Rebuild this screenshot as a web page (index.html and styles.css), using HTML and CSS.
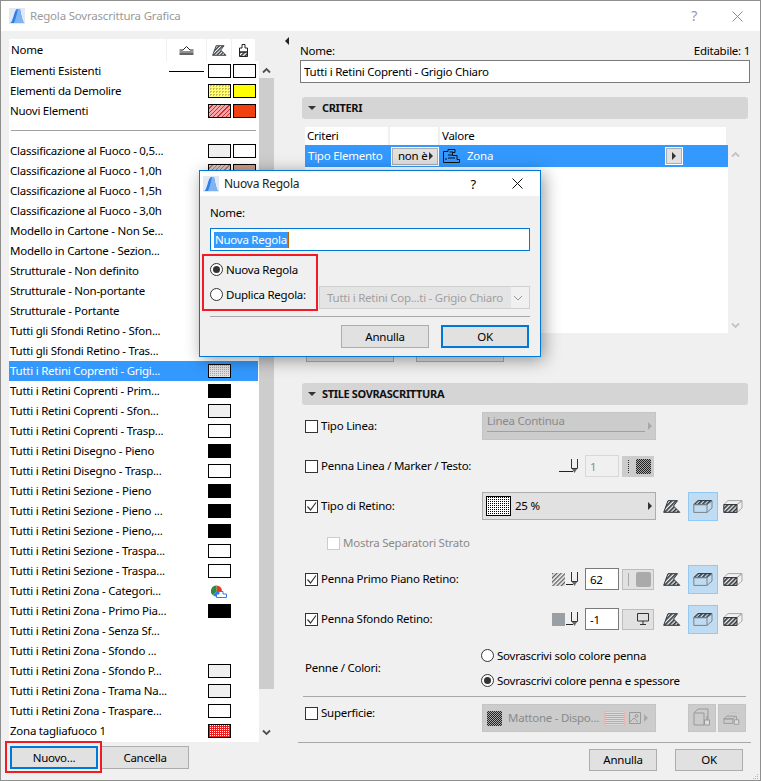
FILE: index.html
```html
<!DOCTYPE html>
<html lang="it">
<head>
<meta charset="utf-8">
<title>Regola Sovrascrittura Grafica</title>
<link rel="stylesheet" href="styles.css">
</head>
<body>
<svg class="defs" aria-hidden="true">
  <defs>
    <pattern id="h" width="3" height="3" patternUnits="userSpaceOnUse" patternTransform="rotate(45)"><rect width="1.6" height="3" fill="#2c3338"/></pattern>
    <pattern id="hg" width="3" height="3" patternUnits="userSpaceOnUse" patternTransform="rotate(45)"><rect width="1.3" height="3" fill="#5c5c5c"/></pattern>
    <pattern id="brick" width="6" height="4" patternUnits="userSpaceOnUse"><rect width="6" height="4" fill="#dcdcdc"/><path d="M0 .5H6M0 2.5H6M2 0V.5M5 2V3" stroke="#b0b0b0" stroke-width="1" fill="none"/></pattern>
    <symbol id="logo" viewBox="0 0 16 16"><rect width="16" height="16" fill="#e3e9f2"/><path d="M1 15C4 15 5 2 8 1L11 1C12 6 13 12 15 15Z" fill="#2f7fe6"/><path d="M5 15C7 10 8 5 9 1L11 1C12 6 13 12 15 15Z" fill="#7fb4f2"/></symbol>
    <symbol id="cut" viewBox="0 0 18 13"><path d="M.7 12.3 5 .7H14.5L10.5 6 16.8 12.3Z" fill="url(#h)" stroke="#2c3338" stroke-width="1"/></symbol>
    <symbol id="box" viewBox="0 0 20 13"><path d="M5 .6H19L14 4.6H.8Z" fill="url(#h)" stroke="#2c3338"/><path d="M.8 4.6H14V12.4H.8Z" fill="none" stroke="#7d8184"/><path d="M14 4.6 19 .6V8L14 12.4" fill="none" stroke="#7d8184"/></symbol>
    <symbol id="boxf" viewBox="0 0 20 13"><path d="M5 .6H19L14 4.6H.8Z" fill="none" stroke="#a6a6a6"/><path d="M14 4.6 19 .6V8L14 12.4" fill="none" stroke="#a6a6a6"/><path d="M.8 4.6H14V12.4H.8Z" fill="url(#h)" stroke="#2c3338"/></symbol>
    <symbol id="pen" viewBox="0 0 20 16"><path d="M0 13.5H14" stroke="#222" fill="none"/><path d="M12.5 1V10.5H18.5V1" stroke="#333" fill="none"/><path d="M13 11H18L15.5 15Z" fill="#666"/></symbol>
    <symbol id="pen-s" viewBox="0 0 13 16"><path d="M0 13.5H7" stroke="#222" fill="none"/><path d="M5.5 1V10.5H11.5V1" stroke="#333" fill="none"/><path d="M6 11H11L8.5 15Z" fill="#666"/></symbol>
  </defs>
</svg>

<div class="window">
  <header class="titlebar">
    <svg class="logo"><use href="#logo"/></svg>
    <span class="title-text">Regola Sovrascrittura Grafica</span>
    <span class="title-help">?</span>
    <svg class="title-close" viewBox="0 0 11 11"><path d="M.5.5 10.5 10.5M10.5.5.5 10.5" stroke="#8c8c8c" fill="none"/></svg>
  </header>

  <div class="main">
    <section class="left">
      <div class="list-head">
        <span class="lh-name">Nome</span>
        <span class="lh-col lh-line"><svg class="ic15" viewBox="0 0 15 10"><path d="M.5 5 4 5 7.5 1.5 11 5H14.5M.5 7H14.5" stroke="#222" fill="none"/><path d="M.5 9H14.5" stroke="#222" stroke-width="1.4"/></svg></span>
        <span class="lh-col lh-a"><svg class="ic13" viewBox="0 0 18 13"><use href="#cut"/></svg></span>
        <span class="lh-col lh-b"><svg class="ic9" viewBox="0 0 9 13"><path d="M3 .5H6V4H8.5V8H.5V4H3Z" fill="none" stroke="#222"/><path d="M.5 8H8.5V12.5H.5Z" fill="url(#h)" stroke="#222"/></svg></span>
      </div>
      <div class="list-wrap">
        <div class="list">
          <div class="rule"><span class="rule-name">Elementi Esistenti</span><i class="line-sample"></i><i class="sw s-white"></i><i class="sw s-white"></i></div>
          <div class="rule"><span class="rule-name">Elementi da Demolire</span><i class="sw s-ydots"></i><i class="sw s-yellow"></i></div>
          <div class="rule"><span class="rule-name">Nuovi Elementi</span><i class="sw s-rhatch"></i><i class="sw s-orange"></i></div>
          <div class="list-sep"></div>
          <div class="rule"><span class="rule-name">Classificazione al Fuoco - 0,5...</span><i class="sw s-gray"></i><i class="sw s-white"></i></div>
          <div class="rule"><span class="rule-name">Classificazione al Fuoco - 1,0h</span><i class="sw s-phatch"></i><i class="sw s-pink"></i></div>
          <div class="rule"><span class="rule-name">Classificazione al Fuoco - 1,5h</span></div>
          <div class="rule"><span class="rule-name">Classificazione al Fuoco - 3,0h</span></div>
          <div class="rule"><span class="rule-name">Modello in Cartone - Non Se...</span></div>
          <div class="rule"><span class="rule-name">Modello in Cartone - Sezion...</span></div>
          <div class="rule"><span class="rule-name">Strutturale - Non definito</span></div>
          <div class="rule"><span class="rule-name">Strutturale - Non-portante</span></div>
          <div class="rule"><span class="rule-name">Strutturale - Portante</span></div>
          <div class="rule"><span class="rule-name">Tutti gli Sfondi Retino - Sfon...</span></div>
          <div class="rule"><span class="rule-name">Tutti gli Sfondi Retino - Tras...</span></div>
          <div class="rule is-selected"><span class="rule-name">Tutti i Retini Coprenti - Grigi...</span><i class="sw s-gdots"></i></div>
          <div class="rule"><span class="rule-name">Tutti i Retini Coprenti - Prim...</span><i class="sw s-black"></i></div>
          <div class="rule"><span class="rule-name">Tutti i Retini Coprenti - Sfon...</span><i class="sw s-gray"></i></div>
          <div class="rule"><span class="rule-name">Tutti i Retini Coprenti - Trasp...</span><i class="sw s-white"></i></div>
          <div class="rule"><span class="rule-name">Tutti i Retini Disegno - Pieno</span><i class="sw s-black"></i></div>
          <div class="rule"><span class="rule-name">Tutti i Retini Disegno - Trasp...</span><i class="sw s-white"></i></div>
          <div class="rule"><span class="rule-name">Tutti i Retini Sezione - Pieno</span><i class="sw s-black"></i></div>
          <div class="rule"><span class="rule-name">Tutti i Retini Sezione - Pieno ...</span><i class="sw s-black"></i></div>
          <div class="rule"><span class="rule-name">Tutti i Retini Sezione - Pieno,...</span><i class="sw s-black"></i></div>
          <div class="rule"><span class="rule-name">Tutti i Retini Sezione - Traspa...</span><i class="sw s-white"></i></div>
          <div class="rule"><span class="rule-name">Tutti i Retini Sezione - Traspa...</span><i class="sw s-white"></i></div>
          <div class="rule"><span class="rule-name">Tutti i Retini Zona - Categori...</span><svg class="pie" viewBox="0 0 16 13"><path d="M5.5 6V.5A5.5 5.5 0 0 1 11 6Z" fill="#e23b1e"/><path d="M5.5 6 11 6A5.5 5.5 0 0 1 2 10.3Z" fill="#2f7fe6"/><path d="M5.5 6 2 10.3A5.5 5.5 0 0 1 5.5 .5Z" fill="#2e8b3c"/><path d="M5.5 12.5V9H8V6.5H12V9H15.5V12.5Z" fill="#fff" stroke="#2f7fe6"/></svg></div>
          <div class="rule"><span class="rule-name">Tutti i Retini Zona - Primo Pia...</span><i class="sw s-black"></i></div>
          <div class="rule"><span class="rule-name">Tutti i Retini Zona - Senza Sf...</span></div>
          <div class="rule"><span class="rule-name">Tutti i Retini Zona - Sfondo ...</span></div>
          <div class="rule"><span class="rule-name">Tutti i Retini Zona - Sfondo P...</span><i class="sw s-gray"></i></div>
          <div class="rule"><span class="rule-name">Tutti i Retini Zona - Trama Na...</span><i class="sw s-gray"></i></div>
          <div class="rule"><span class="rule-name">Tutti i Retini Zona - Traspare...</span><i class="sw s-white"></i></div>
          <div class="rule"><span class="rule-name">Zona tagliafuoco 1</span><i class="sw s-rdots"></i></div>
        </div>
        <div class="vscroll">
          <svg class="chev chev-up" viewBox="0 0 9 7"><path d="M1 5.5 4.5 2 8 5.5" stroke="#505050" stroke-width="1.8" fill="none"/></svg>
          <div class="thumb"></div>
          <svg class="chev chev-down" viewBox="0 0 9 7"><path d="M1 1.5 4.5 5 8 1.5" stroke="#505050" stroke-width="1.8" fill="none"/></svg>
        </div>
      </div>
      <div class="list-buttons">
        <button class="btn btn-focus btn-nuovo">Nuovo...</button>
        <button class="btn btn-cancella">Cancella</button>
      </div>
    </section>

    <div class="splitter"><i class="split-arrow"></i></div>

    <section class="right">
      <div class="name-head"><span>Nome:</span><span>Editabile: 1</span></div>
      <div class="name-input">Tutti i Retini Coprenti - Grigio Chiaro</div>

      <div class="section-head"><i class="tri-down"></i>CRITERI</div>
      <div class="crit-wrap">
        <div class="crit-table">
          <div class="crit-head"><span class="c1">Criteri</span><span class="c2"></span><span class="c3">Valore</span></div>
          <div class="crit-row">
            <span class="c1">Tipo Elemento</span>
            <span class="c2"><span class="mini-btn">non è<i class="tri-right"></i></span></span>
            <span class="c3 zone">
              <svg class="zone-ic" viewBox="0 0 17 14"><path d="M.5 13.5V2.5H5V.5H12V3.5H9.5V6.5H14V10.5H16.5V13.5Z" fill="none" stroke="#111"/><path d="M6.5 3H10M5 6H9M5 9H12M3 9V11" stroke="#111" fill="none"/></svg>
              <span class="zone-text">Zona</span>
              <span class="square-btn"><i class="tri-right"></i></span>
            </span>
          </div>
        </div>
        <div class="crit-scroll">
          <svg class="chev" viewBox="0 0 9 7"><path d="M1 5.5 4.5 2 8 5.5" stroke="#c4c4c4" stroke-width="1.8" fill="none"/></svg>
          <svg class="chev" viewBox="0 0 9 7"><path d="M1 1.5 4.5 5 8 1.5" stroke="#c4c4c4" stroke-width="1.8" fill="none"/></svg>
        </div>
      </div>
      <div class="crit-buttons"><button class="btn btn-crit"></button><button class="btn btn-crit"></button></div>

      <div class="section-head section-style"><i class="tri-down"></i>STILE SOVRASCRITTURA</div>

      <div class="row row-1">
        <label class="opt"><i class="check"></i>Tipo Linea:</label>
        <div class="ctrl"><div class="combo combo-off combo-line"><span class="combo-linetext">Linea Continua</span><i class="tri-right tri-off"></i></div></div>
      </div>
      <div class="row row-2">
        <label class="opt"><i class="check"></i>Penna Linea / Marker / Testo:</label>
        <div class="ctrl ctrl-pen">
          <svg class="pen"><use href="#pen"/></svg>
          <span class="num num-off">1</span>
          <span class="pen-sw pen-sw-off"><i class="bar"></i><i class="chk-block"></i></span>
        </div>
      </div>
      <div class="row row-2">
        <label class="opt"><i class="check is-on"><svg viewBox="0 0 13 13"><path d="M2.5 6.5 5.5 10 11 2.5" stroke="#333" stroke-width="1.2" fill="none"/></svg></i>Tipo di Retino:</label>
        <div class="ctrl"><div class="combo"><i class="pat-25"></i><span class="combo-text">25 %</span><i class="tri-right"></i></div></div>
        <div class="viewset">
          <svg class="v-cut"><use href="#cut"/></svg>
          <span class="toggle"><svg class="v-box"><use href="#box"/></svg></span>
          <svg class="v-box v-last"><use href="#boxf"/></svg>
        </div>
      </div>
      <div class="row row-4">
        <label class="opt opt-sub"><i class="check check-off"></i>Mostra Separatori Strato</label>
      </div>
      <div class="row row-5">
        <label class="opt"><i class="check is-on"><svg viewBox="0 0 13 13"><path d="M2.5 6.5 5.5 10 11 2.5" stroke="#333" stroke-width="1.2" fill="none"/></svg></i>Penna Primo Piano Retino:</label>
        <div class="ctrl ctrl-pen">
          <svg class="mini-hatch" viewBox="0 0 13 13"><rect width="13" height="13" fill="url(#hg)"/></svg>
          <svg class="pen pen-tight"><use href="#pen-s"/></svg>
          <span class="num">62</span>
          <span class="pen-sw"><i class="bar"></i><i class="gray-block"></i></span>
        </div>
        <div class="viewset">
          <svg class="v-cut"><use href="#cut"/></svg>
          <span class="toggle"><svg class="v-box"><use href="#box"/></svg></span>
          <svg class="v-box v-last"><use href="#boxf"/></svg>
        </div>
      </div>
      <div class="row row-2">
        <label class="opt"><i class="check is-on"><svg viewBox="0 0 13 13"><path d="M2.5 6.5 5.5 10 11 2.5" stroke="#333" stroke-width="1.2" fill="none"/></svg></i>Penna Sfondo Retino:</label>
        <div class="ctrl ctrl-pen">
          <i class="mini-solid"></i>
          <svg class="pen pen-tight"><use href="#pen-s"/></svg>
          <span class="num">-1</span>
          <span class="pen-sw pen-sw-mon"><svg class="monitor" viewBox="0 0 12 12"><path d="M.5.5H11.5V8H.5ZM6 8V11M3 11.5H9" stroke="#333" fill="none"/></svg></span>
        </div>
        <div class="viewset">
          <svg class="v-cut"><use href="#cut"/></svg>
          <span class="toggle"><svg class="v-box"><use href="#box"/></svg></span>
          <svg class="v-box v-last"><use href="#boxf"/></svg>
        </div>
      </div>
      <div class="colors">
        <span class="colors-label">Penne / Colori:</span>
        <div class="colors-opts">
          <label class="radio-line"><i class="radio"></i>Sovrascrivi solo colore penna</label>
          <label class="radio-line"><i class="radio is-on"></i>Sovrascrivi colore penna e spessore</label>
        </div>
      </div>
      <div class="sep sep-a"></div>
      <div class="row row-sup">
        <label class="opt opt-top"><i class="check"></i>Superficie:</label>
        <div class="ctrl">
          <div class="combo combo-off">
            <i class="chk-block chk-sup"></i>
            <span class="combo-text combo-text-off">Mattone - Dispo...</span>
            <svg class="brick" viewBox="0 0 21 15"><rect x=".5" y=".5" width="20" height="14" fill="url(#brick)" stroke="#eab4b4"/></svg>
            <svg class="img-ic" viewBox="0 0 12 12"><path d="M.5.5H11.5V11.5H.5Z" fill="none" stroke="#999"/><circle cx="7.5" cy="4" r="1.4" fill="none" stroke="#999"/><path d="M1 10 5 6 9 10" fill="none" stroke="#999"/></svg>
            <i class="tri-right tri-off"></i>
          </div>
        </div>
        <div class="sup-btns">
          <span class="sup-btn"><svg viewBox="0 0 18 20"><path d="M1 5H11V17H1ZM1 5 5 1H15V12L11 17" fill="none" stroke="#999"/><path d="M14 8V12M11.5 12H16.5V17H11.5Z" fill="#ddd" stroke="#999"/></svg></span>
          <span class="sup-btn"><svg viewBox="0 0 20 20"><path d="M5 7 8 4H16" fill="none" stroke="#bbb" stroke-dasharray="2 1"/><path d="M1 11 4 8H14L11 11ZM1 11H11V16H1Z" fill="none" stroke="#999"/><path d="M15 8V12M12.5 12H17.5V17H12.5Z" fill="#ddd" stroke="#999"/></svg></span>
        </div>
      </div>
      <div class="sep sep-b"></div>
      <div class="foot">
        <button class="btn btn-foot">Annulla</button>
        <button class="btn btn-foot">OK</button>
      </div>
    </section>
  </div>

  <i class="grip"></i>
</div>

<div class="highlight hl-new"></div>

<div class="dialog">
  <header class="dlg-title">
    <svg class="logo dlg-logo"><use href="#logo"/></svg>
    <span class="dlg-title-text">Nuova Regola</span>
    <span class="dlg-help">?</span>
    <svg class="dlg-close" viewBox="0 0 11 11"><path d="M.5.5 10.5 10.5M10.5.5.5 10.5" stroke="#111" fill="none"/></svg>
  </header>
  <div class="dlg-body">
    <div class="dlg-label">Nome:</div>
    <div class="dlg-input"><span class="dlg-sel">Nuova Regola</span></div>
    <div class="dlg-radios">
      <label class="dlg-radio"><i class="radio is-on"></i>Nuova Regola</label>
      <div class="dlg-dup">
        <label class="dlg-radio"><i class="radio"></i>Duplica Regola:</label>
        <div class="dlg-select"><span>Tutti i Retini Cop...ti - Grigio Chiaro</span><svg class="dlg-chev" viewBox="0 0 10 6"><path d="M1 1 5 5 9 1" stroke="#999" fill="none"/></svg></div>
      </div>
    </div>
    <div class="dlg-sep"></div>
    <div class="dlg-foot">
      <button class="btn btn-dlg">Annulla</button>
      <button class="btn btn-dlg btn-focus">OK</button>
    </div>
  </div>
  <div class="highlight hl-radios"></div>
</div>
</body>
</html>
```

FILE: styles.css
```css
* { box-sizing: border-box; }
html, body { margin: 0; padding: 0; }
body {
  width: 761px;
  height: 781px;
  position: relative;
  overflow: hidden;
  background: #f0f0f0;
  font-family: "Noto Sans", "Open Sans", sans-serif;
  font-size: 11.5px;
  letter-spacing: -0.25px;
  line-height: 16px;
  color: #000;
}
i { display: block; font-style: normal; }
label { display: flex; align-items: center; }
.defs { position: absolute; width: 0; height: 0; }

.window {
  width: 761px;
  height: 781px;
  border: 1px solid #8f8f8f;
  background: #f0f0f0;
  display: flex;
  flex-direction: column;
}
.titlebar {
  height: 30px;
  background: #fff;
  display: flex;
  align-items: center;
  padding-left: 8px;
  flex: none;
}
.logo { width: 16px; height: 16px; }
.title-text { margin-left: 5px; font-size: 11.5px; letter-spacing: -.2px; color: #9a9a9a; }
.title-help { margin-left: auto; font-size: 14px; color: #999; }
.title-close { width: 11px; height: 11px; margin: 0 17px 0 35px; }

.main { flex: 1; display: flex; min-height: 0; }
.left { width: 282px; padding: 8px 0 0 8px; flex: none; }
.splitter { width: 16px; flex: none; position: relative; }
.split-arrow {
  position: absolute;
  left: 2px;
  top: 6px;
  border: 4px solid transparent;
  border-right-color: #222;
  border-left-width: 0;
}

.list-head { width: 246px; height: 22px; display: flex; background: #fff; }
.lh-name { width: 158px; padding: 3px 0 0 2px; border-right: 1px solid #f0f0f0; }
.lh-col { display: flex; align-items: center; justify-content: center; border-right: 1px solid #f0f0f0; }
.lh-line { width: 40px; }
.lh-a { width: 25px; }
.lh-b { width: 23px; border-right: 0; }
.ic15 { width: 15px; height: 10px; }
.ic13 { width: 15px; height: 11px; }
.ic9 { width: 9px; height: 13px; }

.list-wrap { display: flex; height: 681px; }
.list { width: 250px; background: #fff; }
.rule {
  height: 20px;
  display: flex;
  align-items: center;
  gap: 2px;
}
.rule-name { width: 197px; padding-left: 1px; white-space: nowrap; flex: none; }
.is-selected { background: #3399ff; color: #fff; width: 249px; }
.list-sep { height: 20px; position: relative; }
.list-sep::after {
  content: "";
  position: absolute;
  left: 2px;
  right: 3px;
  top: 9px;
  height: 1px;
  background: #a0a0a0;
}
.pie { width: 16px; height: 13px; margin-left: 3px; }
.line-sample { width: 35px; height: 1px; background: #000; margin: 0 2px 0 -39px; }
.sw { width: 23px; height: 14px; border: 1px solid #000; flex: none; }
.s-white { background: #fff; }
.s-gray { background: #f0f0f0; }
.s-black { background: #000; }
.s-yellow { background: #ffff00; }
.s-orange { background: #f04010; }
.s-pink { background: #d19c88; }
.s-ydots { background: conic-gradient(#cdbd55 25%, #ffff70 0) 0 0 / 3px 3px; }
.s-gdots { background: conic-gradient(#a9a9a9 25%, #e4e4e4 0) 0 0 / 2px 2px; }
.s-rdots { background: conic-gradient(#fff 25%, #e82020 0) 0 0 / 2px 2px; }
.s-rhatch { background: repeating-linear-gradient(135deg, #f6a6a6 0 2px, #d03030 2px 3px); }
.s-phatch { background: repeating-linear-gradient(135deg, #e2c6bd 0 2px, #ad7f76 2px 3px); }

.vscroll { width: 15px; display: flex; flex-direction: column; align-items: center; }
.chev { width: 9px; height: 7px; flex: none; }
.chev-up { margin: 6px 0 4px; }
.thumb { width: 15px; height: 611px; background: #cdcdcd; flex: none; }
.chev-down { margin-top: 40px; }

.list-buttons { display: flex; gap: 3px; padding: 4px 0 0 1px; }
.btn {
  display: block;
  padding: 0;
  height: 23px;
  background: #e1e1e1;
  border: 1px solid #adadad;
  font: inherit;
  letter-spacing: inherit;
  color: #000;
}
.btn-nuovo { width: 88px; }
.btn-cancella { width: 88px; }
.btn-focus { border: 2px solid #0078d7; }
.highlight { position: absolute; border: 2px solid #f01b24; }
.hl-new { left: 5px; top: 741px; width: 97px; height: 32px; }
.hl-radios { left: 2px; top: 83px; width: 116px; height: 57px; }

.right { flex: 1; min-width: 0; padding-top: 12px; }
.name-head { display: flex; justify-content: space-between; height: 17px; padding: 0 10px 0 1px; }
.name-input {
  width: 450px;
  height: 23px;
  margin-left: 1px;
  background: #fff;
  border: 1px solid #7a7a7a;
  padding: 3px 0 0 3px;
}
.section-head {
  width: 446px;
  height: 22px;
  margin: 14px 0 0 3px;
  background: #d5d5d5;
  border-radius: 3px;
  display: flex;
  align-items: center;
  font-weight: 700;
  font-size: 11px;
  letter-spacing: -.35px;
  padding-left: 6px;
  color: #111;
}
.tri-down {
  border: 4px solid transparent;
  border-top-color: #333;
  border-bottom-width: 0;
  margin-right: 6px;
}
.tri-right {
  border: 4px solid transparent;
  border-left-color: #333;
  border-right-width: 0;
  flex: none;
}
.tri-off { border-left-color: #a8a8a8; }

.crit-wrap { display: flex; margin: 8px 0 0 6px; height: 206px; }
.crit-table { width: 423px; background: #fff; }
.crit-head { height: 18px; display: flex; }
.crit-head span { border-right: 2px solid #f0f0f0; padding: 1px 0 0 2px; }
.c1 { width: 85px; flex: none; padding-left: 3px; }
.c2 { width: 50px; flex: none; }
.c3 { flex: 1; }
.crit-row { height: 22px; background: #3399ff; display: flex; align-items: center; color: #fff; }
.crit-row .c1 { padding-left: 3px; }
.crit-row .c2 { padding-left: 0; margin-left: 1px; width: 49px; }
.mini-btn {
  width: 48px;
  height: 19px;
  background: #e1e1e1;
  border: 1px solid #fff;
  outline: 1px solid #adadad;
  outline-offset: -2px;
  color: #000;
  display: flex;
  align-items: center;
  padding-left: 6px;
  gap: 2px;
}
.zone { display: flex; align-items: center; padding-left: 3px; }
.zone-ic { width: 17px; height: 14px; }
.zone-text { margin-left: 7px; }
.square-btn {
  width: 18px;
  height: 18px;
  margin: 0 0 0 auto;
  position: relative;
  left: -45px;
  background: #e1e1e1;
  border: 1px solid #fff;
  outline: 1px solid #adadad;
  outline-offset: -2px;
  display: flex;
  align-items: center;
  justify-content: center;
}
.crit-scroll {
  width: 16px;
  padding: 24px 0 4px 3px;
  display: flex;
  flex-direction: column;
  justify-content: space-between;
}
.crit-buttons { display: flex; gap: 22px; margin: 6px 0 0 7px; }
.btn-crit { width: 88px; }
.section-style { margin-top: 21px; }

.row { display: flex; align-items: center; height: 30px; padding-left: 6px; }
.row-1 { margin-top: 6px; }
.row-2 { margin-top: 10px; }
.row-4 { margin-top: 7px; }
.row-5 { margin-top: 6px; }
.row-sup { margin-top: 6px; }
.opt { width: 177px; flex: none; white-space: nowrap; }
.opt-top { align-self: flex-start; margin-top: 2px; }
.opt-sub { padding-left: 22px; color: #8a8a8a; }
.check {
  width: 13px;
  height: 13px;
  border: 1px solid #333;
  background: #fff;
  margin-right: 3px;
  flex: none;
  position: relative;
}
.check svg { position: absolute; left: -1px; top: -1px; width: 13px; height: 13px; }
.check-off { border-color: #ccc; }
.ctrl { width: 174px; flex: none; display: flex; }
.ctrl-pen { justify-content: flex-end; align-items: center; padding-right: 2px; }
.combo {
  width: 174px;
  height: 28px;
  background: #e1e1e1;
  border: 1px solid #adadad;
  display: flex;
  align-items: center;
  padding: 0 3px;
  position: relative;
}
.combo-off { background: #ccc; color: #8a8a8a; border-color: #c4c4c4; }
.combo-line { align-items: flex-start; }
.combo-linetext {
  width: 160px;
  margin: 0 0 0 1px;
  height: 19px;
  border-bottom: 1px solid #a0a0a0;
}
.combo-line .tri-right { margin: 9px 0 0 2px; }
.combo .tri-right { margin-left: auto; }
.pat-25 {
  width: 25px;
  height: 20px;
  border: 1px solid #000;
  background: conic-gradient(#000 25%, #fff 0) 0 0 / 2px 2px;
  flex: none;
}
.combo-text { margin-left: 4px; white-space: nowrap; }
.combo-text-off { margin-left: 6px; }
.chk-sup { width: 17px; height: 17px; margin-left: 1px; }
.chk-block {
  background: conic-gradient(#222 25%, #aaa 0 50%, #222 0 75%, #aaa 0) 0 0 / 2px 2px;
  width: 15px;
  height: 15px;
  flex: none;
}
.brick { width: 21px; height: 15px; margin-left: 5px; flex: none; }
.img-ic { width: 12px; height: 12px; margin-left: 4px; flex: none; }
.combo-off .tri-right { margin-left: 3px; }

.pen { width: 20px; height: 16px; margin-right: 6px; flex: none; }
.pen-tight { width: 13px; margin-left: 1px; margin-right: 6px; }
.mini-hatch { width: 13px; height: 13px; flex: none; }
.mini-solid { width: 13px; height: 13px; background: #9a9fa3; flex: none; }
.num {
  width: 34px;
  height: 22px;
  background: #fff;
  border: 1px solid #7a7a7a;
  padding: 3px 0 0 4px;
  flex: none;
}
.num-off { background: #f0f0f0; border-color: #d8d8d8; color: #8a8a8a; }
.pen-sw {
  width: 32px;
  height: 21px;
  margin-left: 3px;
  border: 1px solid #bdbdbd;
  background: #e1e1e1;
  display: flex;
  align-items: center;
  padding-left: 5px;
  flex: none;
}
.pen-sw-off { background: #ccc; border-color: #ccc; }
.pen-sw-mon { justify-content: flex-end; padding-right: 4px; }
.bar { width: 1px; height: 13px; background: #a8a8a8; margin-right: 7px; }
.pen-sw-off .bar { background: repeating-linear-gradient(#333 0 1px, transparent 1px 2px); }
.gray-block { width: 15px; height: 15px; background: #aaa; border-radius: 2px; }
.monitor { width: 12px; height: 12px; }

.viewset { display: flex; align-items: center; margin-left: 7px; }
.v-cut { width: 18px; height: 13px; flex: none; }
.toggle {
  width: 30px;
  height: 29px;
  margin: 0 5px 0 7px;
  background: #bfdcf3;
  border: 1px solid #90c8f6;
  display: flex;
  align-items: center;
  justify-content: center;
  flex: none;
}
.v-box { width: 20px; height: 13px; flex: none; }

.colors { display: flex; align-items: center; height: 50px; margin-top: 9px; padding-left: 6px; }
.colors-label { width: 176px; flex: none; }
.radio-line { height: 25px; }
.radio {
  width: 13px;
  height: 13px;
  border: 1px solid #333;
  border-radius: 50%;
  background: #fff;
  margin-right: 3px;
  flex: none;
  display: flex;
  align-items: center;
  justify-content: center;
}
.radio.is-on::after {
  content: "";
  width: 7px;
  height: 7px;
  border-radius: 50%;
  background: #333;
}
.sep { height: 1px; background: #a8a8a8; }
.sep-a { margin: 3px 0 0 4px; width: 443px; }
.sep-b { margin: 9px 0 0 -1px; width: 453px; }
.sup-btns { display: flex; gap: 2px; margin-left: 32px; }
.sup-btn {
  width: 28px;
  height: 28px;
  background: #ccc;
  border: 1px solid #c4c4c4;
  display: flex;
  align-items: center;
  justify-content: center;
}
.sup-btn svg { width: 18px; height: 20px; }
.foot { display: flex; gap: 18px; padding: 6px 0 0 290px; }
.btn-foot { width: 68px; height: 22px; }
.grip {
  position: absolute;
  right: 2px;
  bottom: 2px;
  width: 7px;
  height: 7px;
  background: conic-gradient(#b5b5b5 25%, transparent 0) 0 0 / 2px 2px;
  clip-path: polygon(100% 0, 100% 100%, 0 100%);
}

.dialog {
  position: absolute;
  left: 199px;
  top: 170px;
  width: 342px;
  height: 187px;
  border: 1px solid #0078d7;
  background: #f0f0f0;
  box-shadow: 3px 3px 16px rgba(0, 0, 0, .4);
}
.dlg-title { height: 25px; background: #fff; display: flex; align-items: center; padding-left: 3px; }
.dlg-logo { width: 16px; height: 16px; }
.dlg-title-text { margin-left: 5px; font-size: 12px; color: #222; }
.dlg-help { margin-left: auto; font-size: 13px; }
.dlg-close { width: 11px; height: 11px; margin: 0 17px 0 36px; }
.dlg-body { padding: 9px 10px 0; }
.dlg-label { height: 23px; }
.dlg-input {
  width: 320px;
  height: 23px;
  background: #fff;
  border: 1px solid #0078d7;
  padding: 3px 0 0 3px;
}
.dlg-sel { display: inline-block; height: 16px; background: #3399ff; color: #fff; border-right: 1px solid #c06000; padding: 0 1px; }
.dlg-radios { margin-top: 6px; }
.dlg-radio { height: 25px; width: 109px; white-space: nowrap; flex: none; }
.dlg-dup { display: flex; align-items: flex-start; }
.dlg-select {
  width: 211px;
  height: 23px;
  margin-top: 4px;
  border: 1px solid #d0d0d0;
  display: flex;
  align-items: center;
  justify-content: space-between;
  padding: 0 6px 0 7px;
  color: #a0a0a0;
  white-space: nowrap;
  background: linear-gradient(to left, #f0f0f0 18px, #e4e4e4 18px);
}
.dlg-chev { width: 10px; height: 6px; }
.dlg-sep { height: 1px; background: #a8a8a8; margin-top: 7px; width: 320px; }
.dlg-foot { display: flex; gap: 12px; padding: 8px 0 0 131px; }
.btn-dlg { width: 88px; height: 23px; }
```
